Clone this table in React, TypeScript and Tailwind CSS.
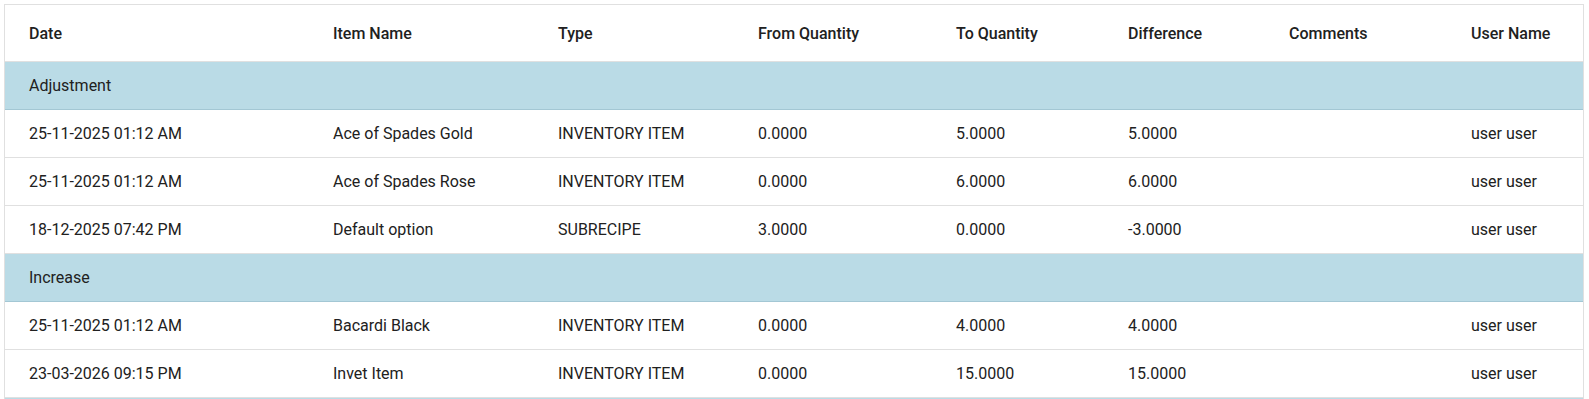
import React from "react";

const cols = "grid grid-cols-[304px_225px_200px_198px_172px_161px_182px_136px]";

type Row = [string, string, string, string, string, string, string, string];

const groups: { name: string; rows: Row[] }[] = [
  {
    name: "Adjustment",
    rows: [
      ["25-11-2025 01:12 AM", "Ace of Spades Gold", "INVENTORY ITEM", "0.0000", "5.0000", "5.0000", "", "user user"],
      ["25-11-2025 01:12 AM", "Ace of Spades Rose", "INVENTORY ITEM", "0.0000", "6.0000", "6.0000", "", "user user"],
      ["18-12-2025 07:42 PM", "Default option", "SUBRECIPE", "3.0000", "0.0000", "-3.0000", "", "user user"],
    ],
  },
  {
    name: "Increase",
    rows: [
      ["25-11-2025 01:12 AM", "Bacardi Black", "INVENTORY ITEM", "0.0000", "4.0000", "4.0000", "", "user user"],
      ["23-03-2026 09:15 PM", "Invet Item", "INVENTORY ITEM", "0.0000", "15.0000", "15.0000", "", "user user"],
    ],
  },
];

const headers = ["Date", "Item Name", "Type", "From Quantity", "To Quantity", "Difference", "Comments", "User Name"];

export default function App() {
  return (
    <div
      className="h-[399px] overflow-hidden bg-white pt-[4px] pl-[4px] text-[16px] text-[#212121]"
      style={{ fontFamily: "Roboto, 'Liberation Sans', sans-serif" }}
    >
      <div className="w-[1580px] border border-[#e0e0e0]">
        <div className={`${cols} h-[57px] items-center border-b border-[#e0e0e0] pt-[2px] font-medium`}>
          {headers.map((h) => (
            <div key={h} className="pl-6">{h}</div>
          ))}
        </div>
        {groups.map((g) => (
          <div key={g.name}>
            <div className="flex h-[48px] items-center border-b border-[#a3c7d4] bg-[#badbe6] pl-6">
              {g.name}
            </div>
            {g.rows.map((r, i) => (
              <div key={i} className={`${cols} h-[48px] items-center border-b border-[#e0e0e0]`}>
                {r.map((c, j) => (
                  <div key={j} className="pl-6">{c}</div>
                ))}
              </div>
            ))}
          </div>
        ))}
        <div className="h-[48px] bg-[#badbe6]" />
      </div>
    </div>
  );
}
